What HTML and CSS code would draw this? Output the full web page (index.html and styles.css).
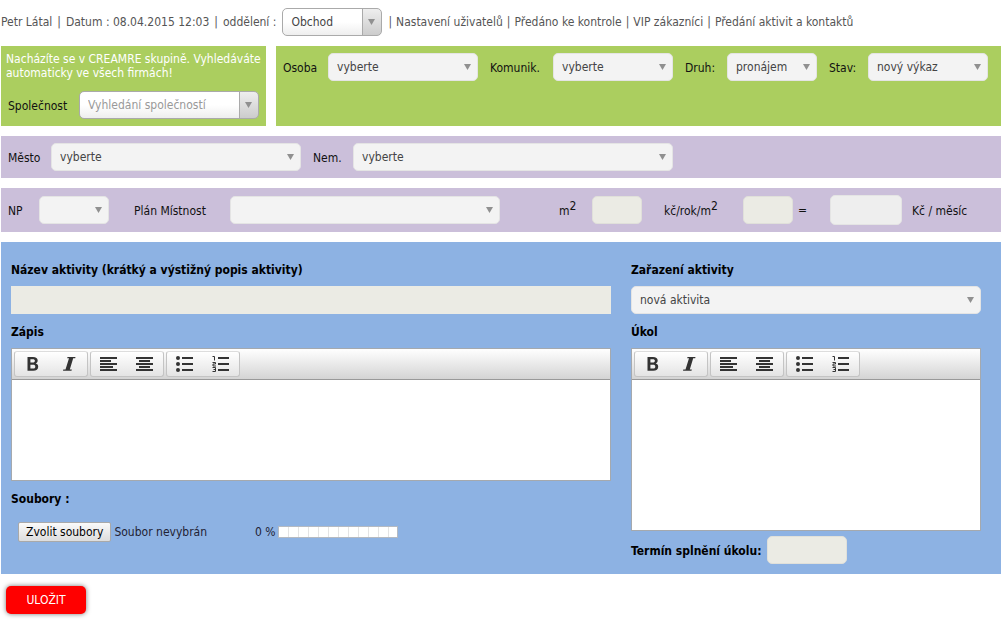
FILE: index.html
```html
<!DOCTYPE html>
<html lang="cs">
<head>
<meta charset="utf-8">
<meta name="viewport" content="width=device-width, initial-scale=1">
<title>Nová aktivita</title>
<link rel="stylesheet" href="styles.css">
</head>
<body>
<svg class="sprite" aria-hidden="true">
  <symbol id="i-bold" viewBox="0 0 16 16"><path fill-rule="evenodd" d="M2.500 1H8c3 0 4.700 1.200 4.700 3.600 0 1.500-.7 2.500-2 2.900 1.700.4 2.500 1.500 2.500 3.200 0 2.700-1.800 4.100-5 4.100H2.500zM5.400 3.200v3.400h2.400c1.400 0 2.100-.6 2.100-1.800 0-1.100-.7-1.600-2.100-1.600zM5.400 8.800v3.800H8c1.500 0 2.300-.6 2.300-1.900S9.500 8.800 8 8.800z"/></symbol>
  <symbol id="i-italic" viewBox="0 0 16 16"><path d="M6.500 1H14.500l-.3 1.300h-2L8.800 13.500h2l-.3 1.300H2l.3-1.300h2.200L8 2.300H6.200z"/></symbol>
  <symbol id="i-left" viewBox="0 0 18 16"><path d="M0 1h17v2H0zM0 4h11v2H0zM0 7h17v2H0zM0 10h13v2H0zM0 13h17v2H0z"/></symbol>
  <symbol id="i-center" viewBox="0 0 18 16"><path d="M0 1h17v2H0zM3 4h11v2H3zM0 7h17v2H0zM3 10h11v2H3zM0 13h17v2H0z"/></symbol>
  <symbol id="i-bullets" viewBox="0 0 18 16"><path d="M6 1h11v2H6zM6 7h11v2H6zM6 13h11v2H6z"/><circle cx="2" cy="2" r="2"/><circle cx="2" cy="8" r="2"/><circle cx="2" cy="14" r="2"/></symbol>
  <symbol id="i-numbers" viewBox="0 0 18 16"><path d="M6 1h11v2H6zM6 7h11v2H6zM6 13h11v2H6z"/><path d="M.5.500H2.500V4.500M.5 6.500H3.500V8H1v2h3M.5 11.500h3v4h-3M1.500 13.500h2" fill="none" stroke="currentColor"/></symbol>
</svg>

<header class="topbar">
  <div class="crumbs"><span>Petr Látal</span><span>|</span><span>Datum : 08.04.2015 12:03</span><span>|</span><label for="dept">oddělení :</label></div>
  <select class="select select--split select--dept" id="dept"><option>Obchod</option></select>
  <nav class="crumbs crumbs--links"><span>|</span><a href="#">Nastavení uživatelů</a><span>|</span><a href="#">Předáno ke kontrole</a><span>|</span><a href="#">VIP zákazníci</a><span>|</span><a href="#">Předání aktivit a kontaktů</a></nav>
</header>

<form class="form">
  <div class="top-panels">
    <section class="panel panel--green company">
      <p class="notice">Nacházíte se v CREAMRE skupině. Vyhledáváte automaticky ve všech firmách!</p>
      <div class="field">
        <label class="w-71" for="company">Společnost</label>
        <select class="select select--split select--empty grow" id="company"><option>Vyhledání společností</option></select>
      </div>
    </section>
    <section class="panel panel--green filters">
      <div class="field"><label class="w-45" for="person">Osoba</label><select class="select w-150" id="person"><option>vyberte</option></select></div>
      <div class="field"><label class="w-63" for="comm">Komunik.</label><select class="select w-120" id="comm"><option>vyberte</option></select></div>
      <div class="field"><label class="w-42" for="kind">Druh:</label><select class="select w-90" id="kind"><option>pronájem</option></select></div>
      <div class="field"><label class="w-39" for="state">Stav:</label><select class="select w-120" id="state"><option>nový výkaz</option></select></div>
    </section>
  </div>

  <section class="panel panel--violet place">
    <div class="field"><label class="w-43" for="city">Město</label><select class="select w-250" id="city"><option>vyberte</option></select></div>
    <div class="field"><label class="w-40" for="estate">Nem.</label><select class="select w-320" id="estate"><option>vyberte</option></select></div>
  </section>

  <section class="panel panel--violet room">
    <div class="field"><label class="w-31" for="floor">NP</label><select class="select w-70" id="floor"><option></option></select></div>
    <div class="field"><label class="w-96" for="plan">Plán Místnost</label><select class="select w-270" id="plan"><option></option></select></div>
    <div class="prices">
      <div class="field"><label class="w-33" for="area">m<sup>2</sup></label><input class="input w-50" id="area"></div>
      <div class="field"><label class="w-79" for="rate">kč/rok/m<sup>2</sup></label><input class="input w-50" id="rate"></div>
      <div class="field"><span class="w-32">=</span><input class="input input--total w-72" id="total"><label for="total">Kč / měsíc</label></div>
    </div>
  </section>

  <section class="panel panel--blue activity">
    <div class="column">
      <label class="title" for="name">Název aktivity (krátký a výstižný popis aktivity)</label>
      <input class="input input--name" id="name">
      <label class="title" for="note">Zápis</label>
      <div class="editor">
        <div class="toolbar">
          <div class="group"><button type="button" aria-label="Tučné"><svg class="letter"><use href="#i-bold"/></svg></button><button type="button" aria-label="Kurzíva"><svg class="letter"><use href="#i-italic"/></svg></button></div>
          <div class="group"><button type="button" aria-label="Zarovnat vlevo"><svg><use href="#i-left"/></svg></button><button type="button" aria-label="Zarovnat na střed"><svg><use href="#i-center"/></svg></button></div>
          <div class="group"><button type="button" aria-label="Odrážky"><svg><use href="#i-bullets"/></svg></button><button type="button" aria-label="Číslování"><svg><use href="#i-numbers"/></svg></button></div>
        </div>
        <textarea class="text text--note" id="note"></textarea>
      </div>
      <span class="title">Soubory :</span>
      <div class="files">
        <div class="picker">
          <input class="picker-input" type="file" id="files" multiple>
          <label class="picker-button" for="files">Zvolit soubory</label>
          <span>Soubor nevybrán</span>
        </div>
        <label class="percent" for="upload">0 %</label><progress class="progress" id="upload" value="0" max="100"></progress>
      </div>
    </div>
    <div class="column">
      <label class="title" for="category">Zařazení aktivity</label>
      <select class="select" id="category"><option>nová aktivita</option></select>
      <label class="title" for="task">Úkol</label>
      <div class="editor">
        <div class="toolbar">
          <div class="group"><button type="button" aria-label="Tučné"><svg class="letter"><use href="#i-bold"/></svg></button><button type="button" aria-label="Kurzíva"><svg class="letter"><use href="#i-italic"/></svg></button></div>
          <div class="group"><button type="button" aria-label="Zarovnat vlevo"><svg><use href="#i-left"/></svg></button><button type="button" aria-label="Zarovnat na střed"><svg><use href="#i-center"/></svg></button></div>
          <div class="group"><button type="button" aria-label="Odrážky"><svg><use href="#i-bullets"/></svg></button><button type="button" aria-label="Číslování"><svg><use href="#i-numbers"/></svg></button></div>
        </div>
        <textarea class="text text--task" id="task"></textarea>
      </div>
      <div class="deadline"><label class="title" for="due">Termín splnění úkolu:</label><input class="input w-80" id="due"></div>
    </div>
  </section>

  <button class="save" type="submit">ULOŽIT</button>
</form>
</body>
</html>
```
FILE: styles.css
```css
* { box-sizing: border-box; }

body {
  margin: 0;
  padding: 8px 2px 16px 1px;
  background: #fff;
  color: #111;
  font-family: Tahoma, "DejaVu Sans Condensed", "DejaVu Sans", sans-serif;
  font-size: 12px;
  line-height: 18px;
}

.sprite { display: none; }

.topbar {
  display: flex;
  align-items: center;
  gap: 6px;
  color: #555;
  white-space: nowrap;
}
.topbar a { color: inherit; text-decoration: none; }
.crumbs { display: flex; gap: 5px; }
.crumbs--links { gap: 4px; }

.form {
  display: flex;
  flex-direction: column;
  gap: 10px;
  margin-top: 10px;
}

.panel--green { background: #abce5f; }
.panel--violet { background: #cbbfda; }
.panel--blue { background: #8db2e3; }

.top-panels { display: flex; gap: 10px; }

.company { flex: 0 0 265px; padding: 6px 7px 7px; }
.notice {
  margin: 0 -2px 11px;
  color: #fff;
  line-height: 14px;
}

.filters {
  flex: 1;
  display: flex;
  flex-wrap: wrap;
  align-content: flex-start;
  gap: 12px;
  min-height: 80px;
  padding: 7px;
}

.place { display: flex; gap: 12px; padding: 7px; }

.room {
  display: flex;
  align-items: center;
  gap: 25px;
  padding: 7px;
}
.prices { display: flex; gap: 22px; margin-left: 34px; }
.prices .field:last-child { margin-left: -17px; }
.prices label:last-child { margin-left: 10px; }

.field { display: flex; align-items: center; white-space: nowrap; }
.field label { padding-top: 1px; }
.grow { flex: 1; }
.w-31 { width: 31px; }
.w-32 { width: 32px; }
.w-33 { width: 33px; }
.w-39 { width: 39px; }
.w-40 { width: 40px; }
.w-42 { width: 42px; }
.w-43 { width: 43px; }
.w-45 { width: 45px; }
.w-50 { width: 50px; }
.w-63 { width: 63px; }
.w-70 { width: 70px; }
.w-71 { width: 71px; }
.w-72 { width: 72px; }
.w-79 { width: 79px; }
.w-80 { width: 80px; }
.w-90 { width: 90px; }
.w-96 { width: 96px; }
.w-120 { width: 120px; }
.w-150 { width: 150px; }
.w-250 { width: 250px; }
.w-270 { width: 270px; }
.w-320 { width: 320px; }

sup { font-size: 12px; line-height: 0; }

.select {
  appearance: none;
  height: 28px;
  padding: 0 24px 0 8px;
  border: 1px solid #e4e4e4;
  border-radius: 5px;
  background: #f3f3f3 url("data:image/svg+xml,%3Csvg xmlns='http://www.w3.org/2000/svg' width='7' height='6'%3E%3Cpath d='M0 0h7L3.500 6z' fill='%23909090'/%3E%3C/svg%3E") no-repeat right 6px center;
  color: #444;
  font: inherit;
}
.select--split {
  border-color: #aaa;
  background:
    url("data:image/svg+xml,%3Csvg xmlns='http://www.w3.org/2000/svg' width='7' height='6'%3E%3Cpath d='M0 0h7L3.500 6z' fill='%23909090'/%3E%3C/svg%3E") no-repeat right 6px center,
    linear-gradient(#aaa, #aaa) no-repeat right 18px top / 1px 100%,
    linear-gradient(#eee, #ccc) no-repeat right top / 18px 100%,
    linear-gradient(#fff 50%, #eee);
}
.select--dept { width: 100px; }
.select--empty { color: #999; }

.input {
  height: 28px;
  padding: 0 8px;
  border: 1px solid #e0e0da;
  border-radius: 5px;
  background: #ebebe4;
  font: inherit;
}
.input--total { height: 30px; border-color: #e4e4e4; background: #eee; }
.input--name { border: 0; border-radius: 0; }

.activity {
  display: grid;
  grid-template-columns: 12fr 7fr;
  gap: 20px;
  padding: 18px 20px 10px 10px;
}
.column { display: flex; flex-direction: column; gap: 8px; min-width: 0; }
.title { padding-top: 2px; color: #000; font-weight: bold; line-height: 16px; }

.editor { border: 1px solid #a5a9ae; background: #fff; }
.toolbar {
  display: flex;
  gap: 2px;
  padding: 2px;
  border-bottom: 1px solid #999;
  background: linear-gradient(#fff, #d4d4d4);
}
.group {
  display: flex;
  border: 1px solid #c4c4c4;
  border-top-color: #ddd;
  border-radius: 3px;
  background: linear-gradient(#fff, #e4e4e4);
}
.group button {
  display: grid;
  place-items: center;
  width: 36px;
  height: 24px;
  padding: 0;
  border: 0;
  background: none;
  color: #333;
}
.group svg { width: 18px; height: 16px; fill: currentColor; overflow: visible; }
.group .letter { width: 16px; }

.text {
  display: block;
  width: 100%;
  padding: 8px;
  border: 0;
  resize: none;
  font: inherit;
}
.text--note { height: 100px; }
.text--task { height: 150px; }

.files {
  display: flex;
  align-items: center;
  margin-top: 7px;
  padding-left: 7px;
  color: #223;
}
.picker { display: flex; align-items: center; gap: 3px; width: 237px; }
.picker-input { position: absolute; width: 1px; height: 1px; opacity: 0; }
.picker-button {
  padding: 0 7px;
  border: 1px solid #a9a9a9;
  border-radius: 2px;
  background: linear-gradient(#fafafa, #ddd);
  color: #000;
}
.percent { width: 23px; }
.progress {
  appearance: none;
  width: 120px;
  height: 12px;
  border: 1px solid #b5bac2;
}
.progress::-webkit-progress-bar {
  background: repeating-linear-gradient(90deg, #fff 0 9px, #e4e4e4 9px 10px);
}
.progress::-webkit-progress-value { background: #7fbf4d; }

.deadline { display: flex; align-items: center; gap: 6px; margin-top: -3px; }

.save {
  align-self: flex-start;
  width: 80px;
  height: 28px;
  margin: 2px 0 0 5px;
  border: 0;
  border-radius: 5px;
  background: #f00;
  box-shadow: 0 0 5px #777;
  color: #fff;
  font: inherit;
}
```
